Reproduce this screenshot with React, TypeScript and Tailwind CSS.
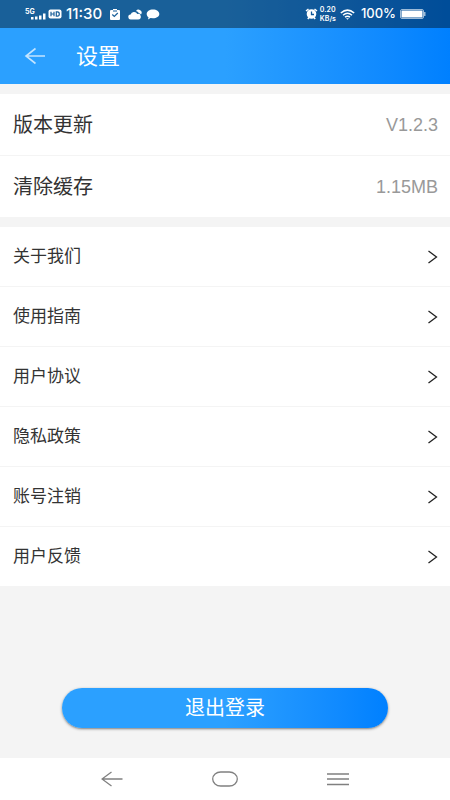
const versionItems = [
  { label: "版本更新", value: "V1.2.3" },
  { label: "清除缓存", value: "1.15MB" },
];

const menuItems = [
  "关于我们",
  "使用指南",
  "用户协议",
  "隐私政策",
  "账号注销",
  "用户反馈",
];

function StatusBar() {
  return (
    <div className="flex h-7 items-center justify-between bg-black/40 px-6 text-white">
      <div className="flex items-center">
        <svg width="24" height="12" viewBox="0 0 24 12" fill="currentColor">
          <text x="1" y="6" fontSize="7" fontWeight="700">
            5G
          </text>
          <rect x="7" y="9" width="2.5" height="2.5" />
          <rect x="11" y="8.5" width="2.5" height="3" />
          <rect x="15" y="7.5" width="2.5" height="4" />
          <rect x="19" y="5.5" width="2.5" height="6" />
        </svg>
        <svg width="14" height="10" viewBox="0 0 14 10">
          <rect x="0.5" y="0.5" width="13" height="9" rx="2" fill="white" />
          <path
            d="M3 2.7v4.6M6 2.7v4.6M3 5h3M8.3 2.9h1.2c1.2 0 1.8.8 1.8 2.1s-.6 2.1-1.8 2.1H8.3z"
            fill="none"
            stroke="#195f99"
            strokeWidth="1.2"
          />
        </svg>
        <span className="ml-1 text-[15px] font-medium">11:30</span>
        <svg className="ml-2" width="10" height="11" viewBox="0 0 10 11">
          <path d="M1 1h2V0h4v1h2q1 0 1 1v8q0 1-1 1H1q-1 0-1-1V2q0-1 1-1z" fill="white" />
          <path d="M2.3 5.5l2 2 3.500-3.500M3 2h4" fill="none" stroke="#195f99" strokeWidth="1.2" />
        </svg>
        <svg className="ml-2" width="14" height="11" viewBox="0 0 14 11" fill="white">
          <path d="M3 10.5a2.5 2.5 0 0 1-.4-5A3.6 3.6 0 0 1 9.3 5a2.8 2.8 0 1 1 .9 5.5z" />
          <path d="M8 2a3 3 0 0 1 5 3.500q-.5-1-2.200-1.500Q10 2.300 8 2z" />
        </svg>
        <svg className="ml-1" width="14" height="11" viewBox="0 0 14 11" fill="white">
          <path d="M7 .5c3.600 0 6.300 1.900 6.300 4.400S10.600 9.200 7 9.200L4.500 9 2 10.500l.5-2.300C1.300 7.400.7 6.200.7 4.900.7 2.400 3.400.5 7 .5z" />
        </svg>
      </div>

      <div className="flex items-center">
        <svg width="13" height="12" viewBox="0 0 13 12">
          <circle cx="6.5" cy="6" r="4.8" fill="white" />
          <path d="M1 3l2.500-2M12 3L9.500 1M2.800 11l1-1.200M10.200 11l-1-1.200" stroke="white" strokeWidth="1.5" />
          <path d="M6.500 3.500v3H9" fill="none" stroke="#0f5799" strokeWidth="1.3" />
        </svg>
        <div className="ml-0.5 flex flex-col text-[7px] leading-[9px] font-semibold">
          <span>0.20</span>
          <span>KB/s</span>
        </div>
        <svg className="ml-1" width="15" height="11" viewBox="0 0 15 11" fill="none" stroke="white">
          <path d="M.8 4Q7.500-1.800 14.200 4M3 6.200q4.500-3.800 9 0M5 8.200q2.500-2 5 0" strokeWidth="1.5" />
          <path d="M6 9.200h3l-1.500 1.500z" fill="white" stroke="none" />
        </svg>
        <span className="ml-1.5 text-[13px] font-medium">100%</span>
        <svg className="ml-1" width="26" height="10" viewBox="0 0 26 10">
          <rect x="0.5" y="0.5" width="23" height="9" rx="1.5" fill="none" stroke="#9dbbd8" />
          <rect x="1.5" y="1.5" width="21" height="7" rx="0.5" fill="white" />
          <rect x="24" y="3" width="1.5" height="4" fill="#9dbbd8" />
        </svg>
      </div>
    </div>
  );
}

export default function App() {
  return (
    <div className="flex min-h-screen flex-col bg-[#f4f4f4] font-['Inter','Noto_Sans_CJK_SC',sans-serif] text-[#333333]">
      <header className="bg-linear-to-r from-[#2ba0ff] from-50% to-[#0080ff] text-white">
        <StatusBar />
        <div className="flex h-14 items-center px-6">
          <button type="button" aria-label="返回" className="cursor-pointer">
            <svg width="22" height="18" viewBox="0 0 22 18" fill="none" stroke="#c3e4ff" strokeWidth="1.6">
              <path d="M2 9h19M11.500 1.500L2 9l9.500 7.500" />
            </svg>
          </button>
          <h1 className="ml-[30px] text-[22px] leading-7">设置</h1>
        </div>
      </header>

      <main className="flex flex-1 flex-col pt-2.5">
        <dl className="divide-y divide-[#f4f4f4] bg-white">
          {versionItems.map((item) => (
            <div
              key={item.label}
              className="flex h-[62px] items-center justify-between pr-3 pl-[13px] last:h-[61px]"
            >
              <dt className="text-xl">{item.label}</dt>
              <dd className="font-['Liberation_Sans',sans-serif] text-lg text-[#999999]">
                {item.value}
              </dd>
            </div>
          ))}
        </dl>

        <nav className="mt-2.5 divide-y divide-[#f4f4f4] bg-white">
          {menuItems.map((label) => (
            <a
              key={label}
              href="#"
              className="flex h-[60px] items-center justify-between pr-3 pl-[13px] last:h-[59px]"
            >
              <span className="text-[17px]">{label}</span>
              <svg width="11" height="14" viewBox="0 0 11 14" fill="none" stroke="#222222" strokeWidth="1.3">
                <path d="M1.500 1l8 6-8 6" />
              </svg>
            </a>
          ))}
        </nav>

        <div className="mt-auto px-[62px] pb-[30px]">
          <button
            type="button"
            className="h-10 w-full cursor-pointer rounded-full bg-linear-to-r from-[#2ba0ff] from-50% to-[#0080ff] text-xl text-white shadow-sm shadow-black/40"
          >
            退出登录
          </button>
        </div>
      </main>

      <footer className="grid h-[42px] grid-cols-3 items-center justify-items-center bg-white px-14 text-[#808080]">
        <button type="button" aria-label="后退" className="cursor-pointer">
          <svg width="22" height="16" viewBox="0 0 22 16" fill="none" stroke="currentColor" strokeWidth="1.3">
            <path d="M1 8h20.500M10.500 1L1 8l9.500 7" />
          </svg>
        </button>
        <button type="button" aria-label="主页" className="cursor-pointer">
          <svg width="26" height="16" viewBox="0 0 26 16" fill="none" stroke="currentColor" strokeWidth="1.3">
            <rect x="0.7" y="1" width="24.6" height="14" rx="8" ry="7" />
          </svg>
        </button>
        <button type="button" aria-label="最近任务" className="cursor-pointer">
          <svg width="22" height="16" viewBox="0 0 22 16" fill="none" stroke="currentColor" strokeWidth="1.3">
            <path d="M0 3h22M0 8h22M0 13.500h22" />
          </svg>
        </button>
      </footer>
    </div>
  );
}
